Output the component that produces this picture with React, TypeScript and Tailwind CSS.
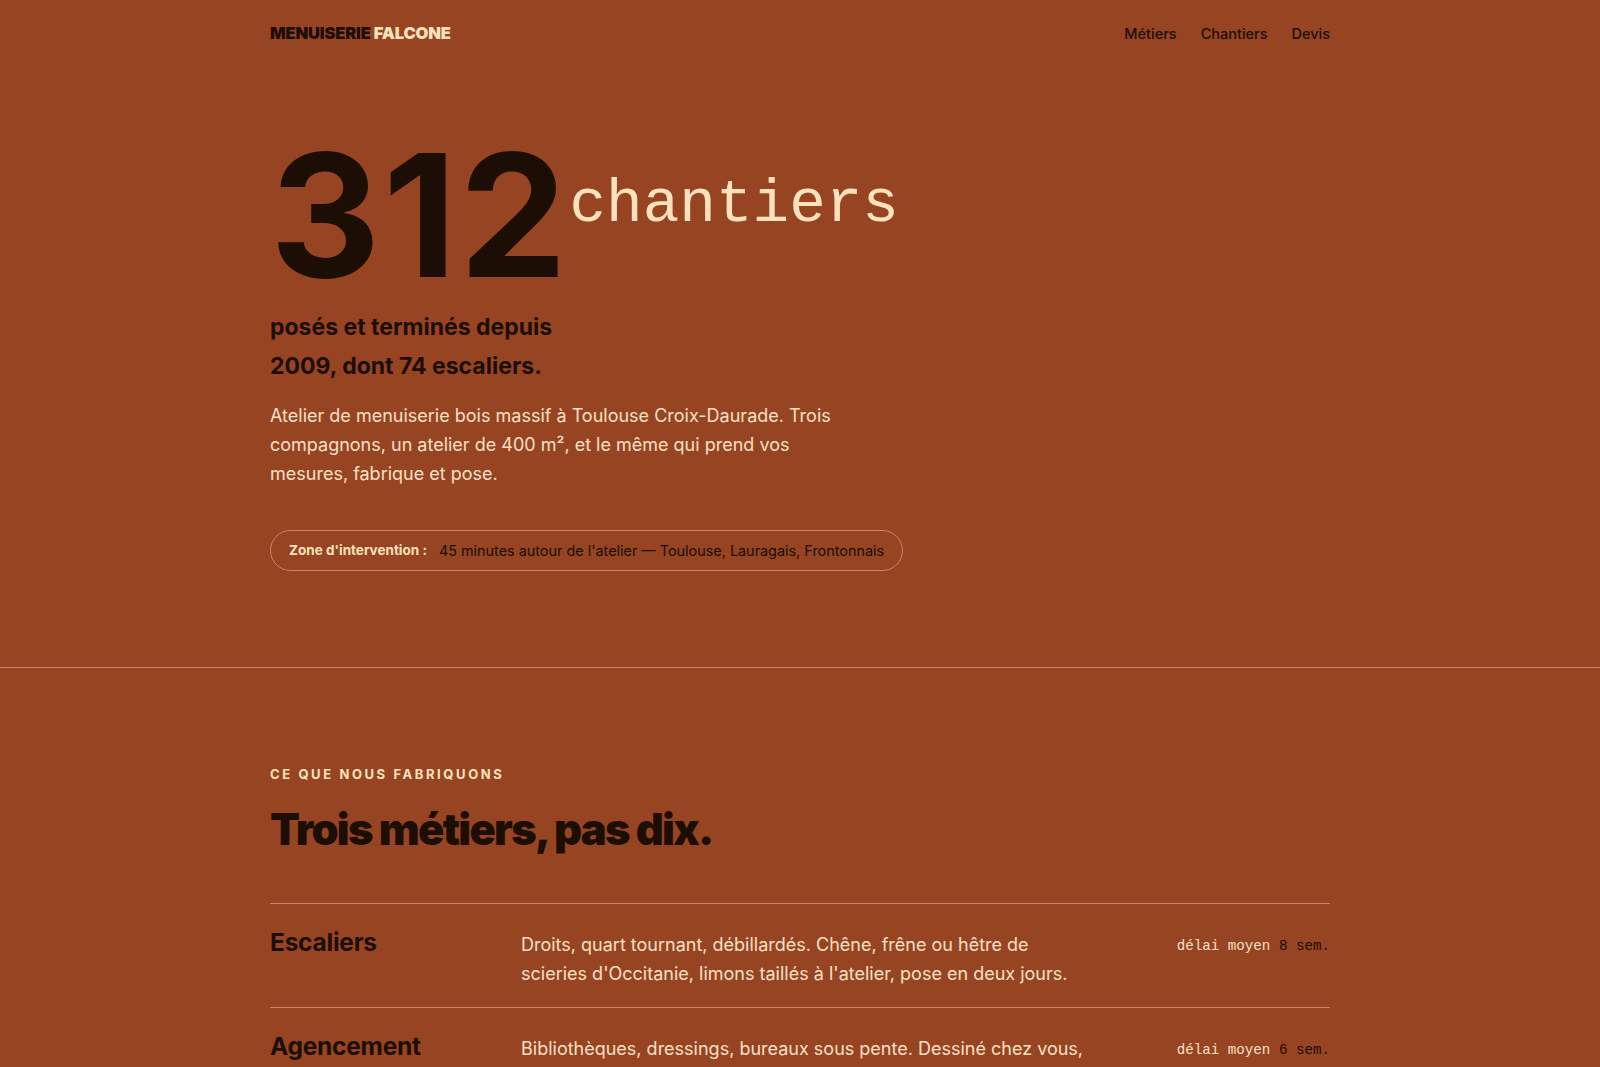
import React from "react";

const sans = "font-['Inter','Roboto',sans-serif]";
const display = "font-['Inter','Roboto',sans-serif]";
const mono = "font-['Liberation_Mono','DejaVu_Sans_Mono',monospace]";

const rows = [
  {
    title: "Escaliers",
    desc: "Droits, quart tournant, débillardés. Chêne, frêne ou hêtre de scieries d'Occitanie, limons taillés à l'atelier, pose en deux jours.",
    delay: "8",
  },
  {
    title: "Agencement",
    desc: "Bibliothèques, dressings, bureaux sous pente. Dessiné chez vous, fabriqué à l'atelier, posé sans surprise.",
    delay: "6",
  },
];

export default function App() {
  return (
    <div className={`min-h-screen bg-[#974422] text-[#1c0d05] ${sans}`}>
      <header className="mx-auto flex h-[67px] max-w-[1060px] items-center justify-between">
        <div className={`${display} text-[16.5px] font-black tracking-[-0.01em]`}>
          <span className="text-[#1c0d05]">MENUISERIE</span>{" "}
          <span className="text-[#ffe2bd]">FALCONE</span>
        </div>
        <nav className="flex items-center gap-6 text-[14.5px] font-medium text-[#1c0d05]">
          <a>Métiers</a>
          <a>Chantiers</a>
          <a>Devis</a>
        </nav>
      </header>

      <section className="border-b border-[#c9866a]">
        <div className="mx-auto max-w-[1060px] pt-[62px] pb-[96px]">
          <h1 className="flex items-start">
            <span className={`${display} text-[171px] font-bold leading-none tracking-[0.015em] text-[#1c0d05]`}>
              312
            </span>
            <span className={`${mono} mt-[45px] text-[61px] leading-none text-[#ffe2bd]`}>chantiers</span>
          </h1>
          <p className="mt-[8px] max-w-[320px] text-[23px] font-bold leading-[39px] text-[#1c0d05]">
            posés et terminés depuis 2009, dont 74 escaliers.
          </p>
          <p className="mt-[15px] max-w-[575px] text-[18px] leading-[29px] text-[#fbe0c6]">
            Atelier de menuiserie bois massif à Toulouse Croix-Daurade. Trois compagnons, un atelier de 400 m², et le même qui prend vos mesures, fabrique et pose.
          </p>
          <div className="mt-[42px] inline-flex h-[41px] items-center gap-3 rounded-full border border-[#c9866a] px-[18px]">
            <span className="text-[13.5px] font-bold text-[#ffe2bd]">Zone d'intervention :</span>
            <span className="text-[14.4px] text-[#1c0d05]">45 minutes autour de l'atelier — Toulouse, Lauragais, Frontonnais</span>
          </div>
        </div>
      </section>

      <section className="mx-auto max-w-[1060px] pt-[96px] pb-16">
        <div className={`${display} text-[13px] font-bold uppercase leading-5 tracking-[0.2em] text-[#ffe2bd]`}>
          Ce que nous fabriquons
        </div>
        <h2 className={`${display} mt-[21px] text-[43.5px] font-black leading-[48px] tracking-[-0.04em] text-[#1c0d05]`}>
          Trois métiers, pas dix.
        </h2>
        <div className="mt-[50px] border-t border-[#c9866a]">
          {rows.map((r) => (
            <div
              key={r.title}
              className="grid grid-cols-[251px_1fr_auto] items-start border-b border-[#c9866a] pt-[26px] pb-[19px]"
            >
              <div className="-mt-[3px] text-[24.5px] font-bold leading-[30px] tracking-[-0.01em] text-[#1c0d05]">{r.title}</div>
              <p className="max-w-[565px] text-[18px] leading-[29px] text-[#fbe0c6]">{r.desc}</p>
              <div className={`${mono} pt-[6px] text-[14.2px] leading-5`}>
                <span className="text-[#fbe0c6]">délai moyen </span>
                <span className="text-[#1c0d05]">{r.delay} sem.</span>
              </div>
            </div>
          ))}
        </div>
      </section>
    </div>
  );
}
